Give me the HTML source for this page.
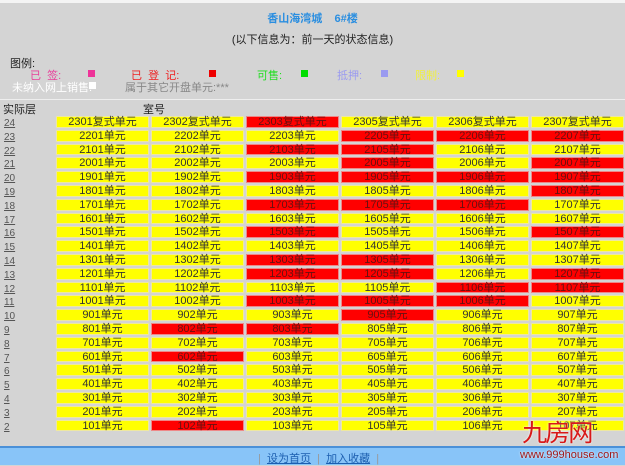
<!DOCTYPE html>
<html><head><meta charset="utf-8"><style>
*{margin:0;padding:0;box-sizing:border-box}
body{width:625px;height:465px;overflow:hidden;background:#d4d4d4;font-family:"Liberation Sans","Noto Sans CJK SC",sans-serif;font-size:11px;color:#222;position:relative}
.a{position:absolute;white-space:nowrap}
.sq{position:absolute;width:7px;height:7px}
#grid{position:absolute;left:3px;top:116px;display:grid;grid-template-columns:51px repeat(6,93px);column-gap:2px;row-gap:2px;grid-auto-rows:11.8px}
#grid div{text-align:center;line-height:10px;font-size:11px;color:#333;border:1px solid #eee8a0}
#grid div.l{text-align:left;border:none;text-decoration:underline;color:#555;padding-left:1px;font-size:10px;line-height:15px}
.y{background:#ffff00}
.r{background:#ff0000;border-color:#e88!important;color:#611!important}
</style></head><body>
<div class="a" style="left:0;top:0;width:625px;height:3px;background:#f4f4f4"></div>
<div class="a" style="left:0;top:10px;width:625px;text-align:center;color:#2a8ee0;font-weight:bold;font-size:11px">香山海湾城&nbsp;&nbsp;&nbsp;&nbsp;6#楼</div>
<div class="a" style="left:0;top:31px;width:625px;text-align:center;color:#222;font-size:11px">(以下信息为：前一天的状态信息)</div>
<div class="a" style="left:10px;top:55px;font-size:11px">图例:</div>
<div class="a" style="left:30px;top:67px;color:#e8409a">已&nbsp;&nbsp;签:</div><div class="sq" style="left:88px;top:70px;background:#ee3399"></div>
<div class="a" style="left:131px;top:67px;color:#ee2222">已&nbsp;&nbsp;登&nbsp;&nbsp;记:</div><div class="sq" style="left:209px;top:70px;background:#ee0000"></div>
<div class="a" style="left:257px;top:67px;color:#22dd22">可售:</div><div class="sq" style="left:301px;top:70px;background:#00dd00"></div>
<div class="a" style="left:337px;top:67px;color:#9a9af0">抵押:</div><div class="sq" style="left:381px;top:70px;background:#9a9af0"></div>
<div class="a" style="left:415px;top:67px;color:#f0f040">限制:</div><div class="sq" style="left:457px;top:70px;background:#ffff00"></div>
<div class="a" style="left:12px;top:79px;color:#fff">未纳入网上销售:</div><div class="sq" style="left:89px;top:82px;background:#fff"></div>
<div class="a" style="left:125px;top:79px;color:#888">属于其它开盘单元:***</div>
<div class="a" style="left:0;top:99px;width:625px;height:1px;background:#eee"></div>
<div class="a" style="left:3px;top:101px">实际层</div>
<div class="a" style="left:143px;top:101px">室号</div>
<div id="grid"></div>
<div class="a" style="left:0;top:446px;width:625px;height:2px;background:#4a90d8"></div>
<div class="a" style="left:0;top:448px;width:625px;height:17px;background:#88c4f8"></div>
<div class="a" style="left:258px;top:450px;color:#1c5fb0"><span style="color:#999">|</span>&nbsp;&nbsp;<u>设为首页</u>&nbsp;&nbsp;<span style="color:#999">|</span>&nbsp;&nbsp;<u>加入收藏</u>&nbsp;&nbsp;<span style="color:#999">|</span></div>
<div class="a" style="left:522px;top:421px;font-size:24px;color:#d81818;letter-spacing:-2px;line-height:26px;transform:scaleX(1.05);transform-origin:left;text-shadow:0 0 2px #fff">九房网</div>
<div class="a" style="left:520px;top:449px;font-size:11px;color:#a01818;text-shadow:0 0 2px #fff">www.999house.com</div>
<script>
var reds={24:[0,0,1,0,0,0],23:[0,0,0,1,1,1],22:[0,0,1,1,0,0],21:[0,0,0,1,0,1],20:[0,0,1,1,1,1],19:[0,0,0,0,0,1],18:[0,0,1,1,1,0],16:[0,0,1,0,0,1],14:[0,0,1,1,0,0],13:[0,0,1,1,0,1],12:[0,0,0,0,1,1],11:[0,0,1,1,1,0],10:[0,0,0,1,0,0],9:[0,1,1,0,0,0],7:[0,1,0,0,0,0],2:[0,1,0,0,0,0]};
var h='';var suf=['01','02','03','05','06','07'];
for(var f=24;f>=2;f--){h+='<div class="l">'+f+'</div>';var rr=reds[f]||[0,0,0,0,0,0];
for(var c=0;c<6;c++){var t=(f==24?'23'+suf[c]+'复式单元':(f-1)+suf[c]+'单元');h+='<div class="'+(rr[c]?'r':'y')+'">'+t+'</div>';}}
document.getElementById('grid').innerHTML=h;
</script>
</body></html>
